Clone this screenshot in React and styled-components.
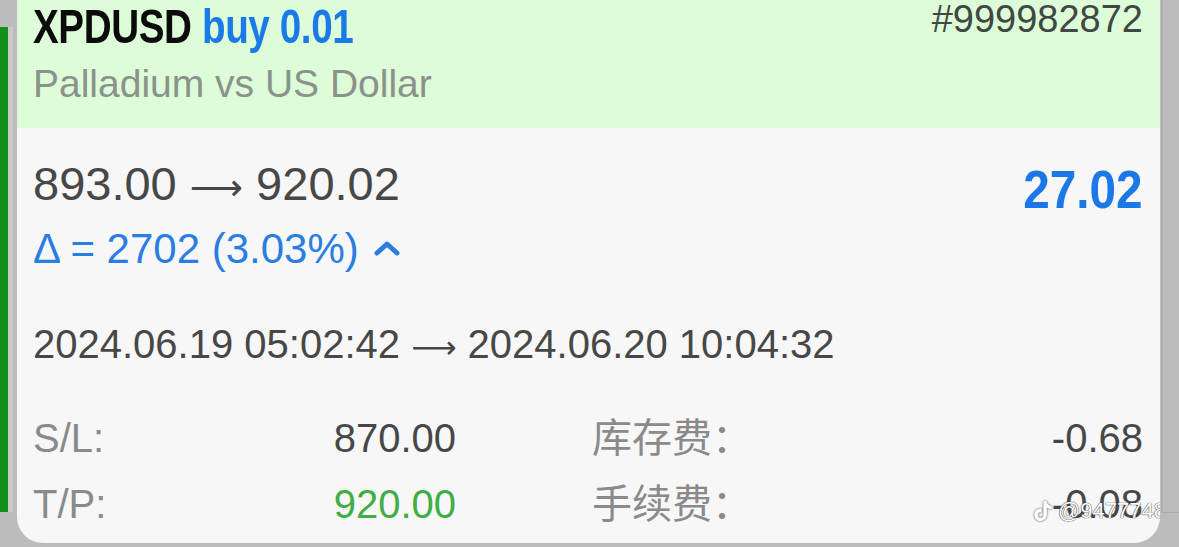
import styled, { createGlobalStyle } from "styled-components";
import { SiTiktok } from "react-icons/si";

const GlobalStyle = createGlobalStyle`
  html, body {
    margin: 0;
    padding: 0;
    background: #bcbcbc;
  }
  body {
    font-family: "Liberation Sans", "Noto Sans CJK SC", sans-serif;
    overflow: hidden;
  }
`;

const details = [
  { label: "S/L:", value: "870.00", tone: "dark", label2: "库存费：", value2: "-0.68" },
  { label: "T/P:", value: "920.00", tone: "green", label2: "手续费：", value2: "-0.08" },
];

const App = () => {
  return (
    <>
      <GlobalStyle />
      <Page>
        <LeftRail>
          <RailStrip>
            <GreenBar />
            <LightBar />
          </RailStrip>
        </LeftRail>

        <Card>
          <Header>
            <TopRow>
              <Title>
                XPDUSD <Side>buy 0.01</Side>
              </Title>
              <Ticket>#999982872</Ticket>
            </TopRow>
            <Subtitle>Palladium vs US Dollar</Subtitle>
          </Header>

          <Body>
            <PriceRow>
              <Prices>
                893.00 <Arrow>⟶</Arrow> 920.02
              </Prices>
              <Profit>27.02</Profit>
            </PriceRow>

            <Delta>
              Δ = 2702 (3.03%)
              <svg width="28" height="18" viewBox="0 0 28 18">
                <path
                  d="M4 14 L14 5 L24 14"
                  fill="none"
                  stroke="#2a7de1"
                  strokeWidth="5"
                  strokeLinecap="round"
                  strokeLinejoin="round"
                />
              </svg>
            </Delta>

            <Times>
              2024.06.19 05:02:42 <Arrow>⟶</Arrow> 2024.06.20 10:04:32
            </Times>

            <DetailGrid>
              {details.map((row) => (
                <DetailRow key={row.label}>
                  <Pair>
                    <Label>{row.label}</Label>
                    <Value $tone={row.tone}>{row.value}</Value>
                  </Pair>
                  <Pair>
                    <Label>{row.label2}</Label>
                    <Value>{row.value2}</Value>
                  </Pair>
                </DetailRow>
              ))}
            </DetailGrid>

            <Watermark>
              <SiTiktok />
              <span>@9477748</span>
            </Watermark>
          </Body>
        </Card>

        <RightGutter />
      </Page>
    </>
  );
};

export default App;

const Page = styled.div`
  width: 1179px;
  height: 547px;
  display: flex;
  align-items: flex-start;
  overflow: hidden;
`;

const LeftRail = styled.div`
  width: 17px;
  flex-shrink: 0;
  padding-top: 27px;
`;

const RailStrip = styled.div`
  display: flex;
  height: 485px;
`;

const GreenBar = styled.div`
  width: 8px;
  background: #12901c;
`;

const LightBar = styled.div`
  width: 5px;
  background: #c8c8c8;
`;

const Card = styled.div`
  width: 1143px;
  height: 543px;
  flex-shrink: 0;
  background: #f7f7f7;
  border-radius: 0 0 26px 26px;
  display: flex;
  flex-direction: column;
  overflow: hidden;
`;

const Header = styled.div`
  height: 128px;
  flex-shrink: 0;
  box-sizing: border-box;
  background: #ddfcd8;
  padding: 2px 17px 0 16px;
`;

const TopRow = styled.div`
  display: flex;
  justify-content: space-between;
  align-items: flex-start;
  height: 50px;
`;

/* condensed bold, like the app's ticker font */
const Title = styled.div`
  font-family: "Liberation Sans", sans-serif;
  font-weight: 700;
  font-size: 48px;
  line-height: 50px;
  letter-spacing: -0.5px;
  color: #0b0b0b;
  white-space: nowrap;
  transform: scaleX(0.805);
  transform-origin: left center;
`;

const Side = styled.span`
  color: #1a7be8;
`;

const Ticket = styled.div`
  font-size: 38px;
  line-height: 38px;
  margin-top: -2px;
  color: #3f4842;
`;

const Subtitle = styled.div`
  font-size: 39px;
  line-height: 46px;
  margin-top: 9px;
  color: #8b918b;
`;

const Body = styled.div`
  position: relative;
  flex: 1;
  padding: 28px 17px 0 16px;
`;

const PriceRow = styled.div`
  display: flex;
  justify-content: space-between;
  align-items: flex-start;
`;

const Arrow = styled.span`
  font-family: "DejaVu Sans", sans-serif;
  font-size: 0.79em;
  line-height: 0;
`;

const Prices = styled.div`
  font-size: 47px;
  line-height: 56px;
  color: #474747;
`;

const Profit = styled.div`
  font-family: "Liberation Sans", sans-serif;
  font-weight: 700;
  font-size: 53px;
  line-height: 56px;
  margin: 6px 0 -6px;
  color: #1c78e6;
  transform: scaleX(0.9);
  transform-origin: right center;
`;

const Delta = styled.div`
  display: flex;
  align-items: center;
  gap: 14px;
  margin-top: 12px;
  font-size: 42px;
  line-height: 50px;
  color: #2a7de1;

  & svg {
    margin-top: -2px;
  }
`;

const Times = styled.div`
  margin-top: 45px;
  font-size: 40px;
  line-height: 50px;
  color: #474747;
`;

const DetailGrid = styled.div`
  margin-top: 36px;
`;

const DetailRow = styled.div`
  display: grid;
  grid-template-columns: 423px 1fr;
  column-gap: 136px;
  height: 66px;
`;

const Pair = styled.div`
  display: flex;
  justify-content: space-between;
  font-size: 40px;
  line-height: 66px;
`;

const Label = styled.span`
  color: #8a8a8a;
`;

const Value = styled.span`
  color: ${({ $tone }) => ($tone === "green" ? "#3fae45" : "#474747")};
`;

const Watermark = styled.div`
  position: absolute;
  right: -6px;
  bottom: 20px;
  display: flex;
  align-items: center;
  gap: 5px;
  font-size: 22px;
  line-height: 24px;
  color: #ffffff;
  text-shadow: 0 0 1px #333, 0 0 1px #333;

  & svg {
    width: 20px;
    height: 20px;
    color: #ffffff;
    filter: drop-shadow(0 0 1px #444);
  }
`;

const RightGutter = styled.div`
  flex: 1;
  height: 512px;
  border-left: 2px solid #b0b0b0;
  border-bottom: 1px solid #a8a8a8;
  margin-left: 1px;
`;
